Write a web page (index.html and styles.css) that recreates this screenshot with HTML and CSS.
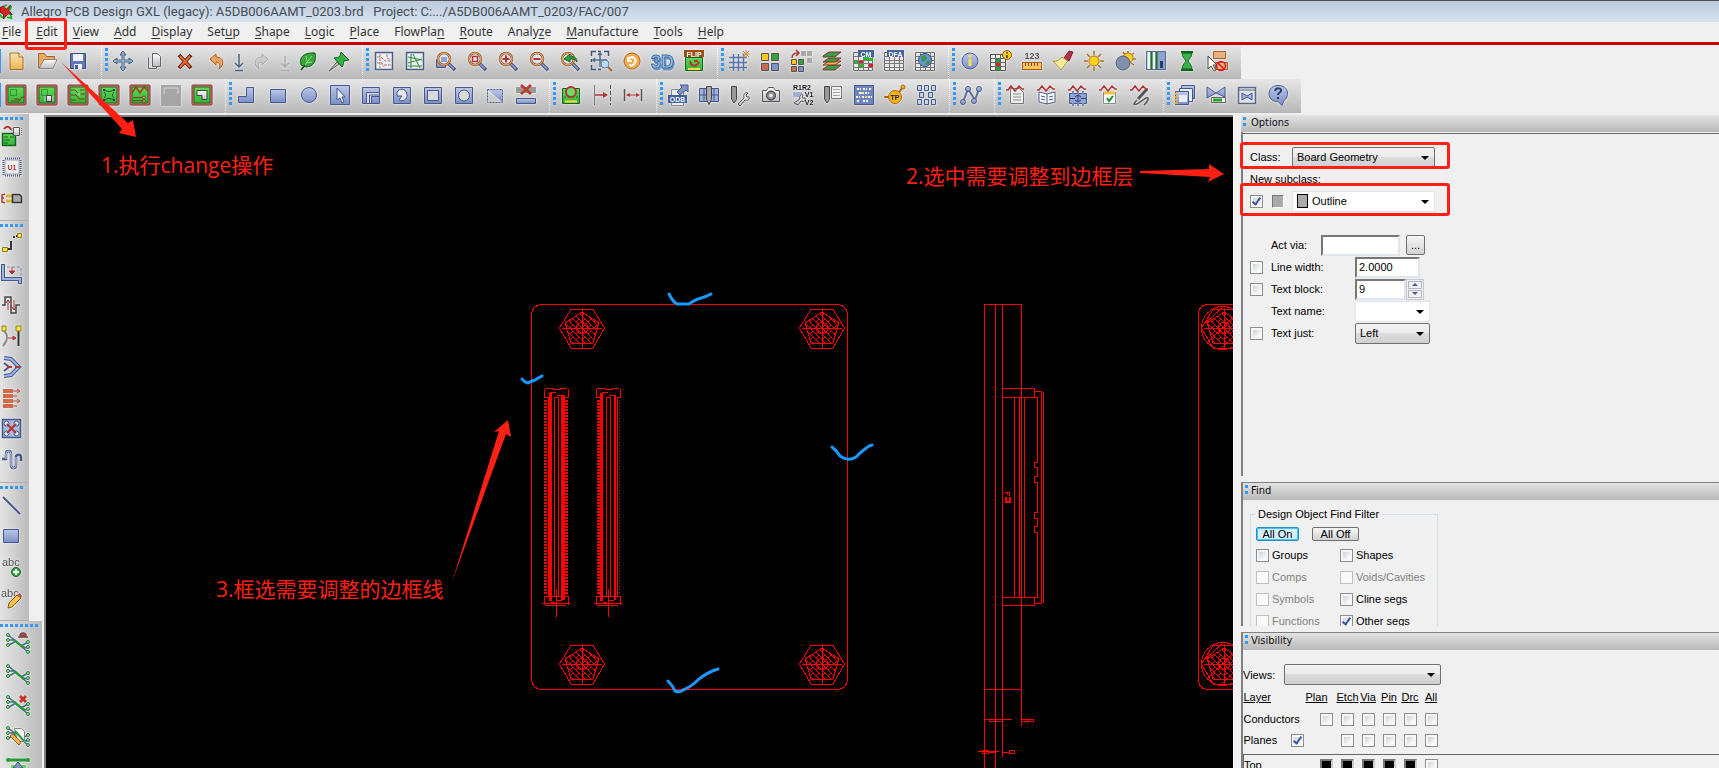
FILE: index.html
```html
<!DOCTYPE html>
<html lang="en">
<head>
<meta charset="utf-8">
<title>Allegro PCB Design GXL (legacy): A5DB006AAMT_0203.brd</title>
<link rel="stylesheet" href="styles.css">
</head>
<body>
<svg class="defs" width="0" height="0" aria-hidden="true">
  <defs>
    <linearGradient id="gb" x2="0" y2="1"><stop stop-color="#bcc8e8"/><stop offset="1" stop-color="#7c8fc4"/></linearGradient>
    <linearGradient id="gy" x2="0" y2="1"><stop stop-color="#fde3ae"/><stop offset="1" stop-color="#eeb356"/></linearGradient>
    <linearGradient id="gg" x2="0" y2="1"><stop stop-color="#62d858"/><stop offset="1" stop-color="#35b435"/></linearGradient>
    <linearGradient id="gs" x2="0" y2="1"><stop stop-color="#fff"/><stop offset="1" stop-color="#b9bcc4"/></linearGradient>
    <pattern id="hatch" width="6" height="6" patternUnits="userSpaceOnUse"><path d="M0 0L6 6M0 6L3 3" stroke="#f00" fill="none"/></pattern>
    <symbol id="lens" viewBox="0 0 24 24"><path d="M14 14l7 7" stroke="#46547c" stroke-width="3.500"/><path d="M15 15l5 5" stroke="#8ea0d0" stroke-width="1.500"/><circle cx="10" cy="10" r="6" fill="#dfe7f6" stroke="#9a5a2c" stroke-width="2.500"/><circle cx="10" cy="10" r="6" fill="none" stroke="#f0b884"/></symbol>
    <symbol id="pcb" viewBox="0 0 24 24"><rect x="2" y="2" width="20" height="20" rx="1" fill="#e87070" stroke="#7c2b2b"/><rect x="4" y="4" width="16" height="16" fill="url(#gg)" stroke="#1b6b1f"/></symbol>
    <symbol id="sheet" viewBox="0 0 24 24"><path d="M2.500 3.500h19v18h-19z" fill="#e8e8e8" stroke="#6d6d6d"/><path d="M2 7.500h20M2 11.500h20M2 14.500h20M2 18.500h20M7.500 3v19M12.500 3v19M17.500 3v19" stroke="#777" fill="none"/></symbol>
    <symbol id="wave" viewBox="0 0 24 24"><path d="M2 7h2l3-4 4 5 4-5 3 3h2" fill="none" stroke="#b23434" stroke-width="1.500"/></symbol>
    <symbol id="ratsnest" viewBox="0 0 24 24"><path d="M2 4l8 6M2 9h7M3 14l7-4M15 15l7-4M16 16l6 1M16 16l6 5" stroke="#4d6596" stroke-width="1.500" fill="none"/><path d="M8 9l10 8" stroke="#239a35" stroke-width="2.500"/><g fill="#b7dcb7" stroke="#1d7d31"><circle cx="2" cy="4" r="1.500"/><circle cx="2" cy="9" r="1.500"/><circle cx="2" cy="14" r="1.500"/><circle cx="22" cy="11" r="1.500"/><circle cx="22" cy="16" r="1.500"/><circle cx="22" cy="21" r="1.500"/></g></symbol>
    <g id="screw" fill="none" stroke="#f00"><path d="M-11-18.500h22L22.500 0 11 20h-22L-22.500 0z"/><path d="M0-16l17 11-6 20h-22l-6-20z" fill="url(#hatch)"/><circle r="6"/><path d="M-20 .5H20M.5-20V21"/></g>
  </defs>
</svg>

<div class="app">
  <header class="titlebar">
    <svg class="logo" viewBox="0 0 16 18" aria-hidden="true"><path d="M0 4l4-2 3 4 5-5-2 6 4 5-5-1-5 6V12L0 9z" fill="#d22" stroke="#611"/><path d="M5 2l3-1M11 7l2-5M8 15l5 1-1-4M0 12l3 4" stroke="#0b0" stroke-width="2" fill="none"/></svg>
    <h1 class="title">Allegro PCB Design GXL (legacy): A5DB006AAMT_0203.brd&nbsp;&nbsp; Project: C:.../A5DB006AAMT_0203/FAC/007</h1>
  </header>
  <nav class="menubar">
    <a href="#"><u>F</u>ile</a><a href="#" class="edit"><u>E</u>dit</a><a href="#"><u>V</u>iew</a><a href="#"><u>A</u>dd</a><a href="#"><u>D</u>isplay</a><a href="#">Set<u>u</u>p</a><a href="#"><u>S</u>hape</a><a href="#"><u>L</u>ogic</a><a href="#"><u>P</u>lace</a><a href="#">FlowPla<u>n</u></a><a href="#"><u>R</u>oute</a><a href="#">Analy<u>z</u>e</a><a href="#"><u>M</u>anufacture</a><a href="#"><u>T</u>ools</a><a href="#"><u>H</u>elp</a>
  </nav>

  <div class="toolrow">
    <div class="group first">
      <button aria-label="New"><svg viewBox="0 0 24 24"><path d="M6 4h9l4 4v12.500H6z" fill="url(#gy)" stroke="#a0702a"/><path d="M15 4v4h4" fill="#fff3d5" stroke="#a0702a"/></svg></button>
      <button aria-label="Open"><svg viewBox="0 0 24 24"><path d="M3.500 19V4.500h6l2 3h8V11" fill="#e9ab62" stroke="#a0602a"/><path d="M4 19.500l5-9h13l-4 9z" fill="url(#gs)" stroke="#8d8377"/></svg></button>
      <button aria-label="Save"><svg viewBox="0 0 24 24"><path d="M4.500 4.500h15v15h-15z" fill="#6479b8" stroke="#3a4b80"/><path d="M7 5h10v7H7zM8 15h8v5H8z" fill="#eef1fa"/><path d="M9 16h3v4H9z" fill="#4b5d94"/></svg></button>
    </div>
    <div class="group"><i class="grip"></i>
      <button aria-label="Move"><svg viewBox="0 0 24 24"><path d="M12 3v18M3 12h18" stroke="#3f5d7d" stroke-width="3"/><path d="M12 2l3 4H9zM12 22l3-4H9zM2 12l4-3v6zM22 12l-4-3v6z" fill="#6f93b5" stroke="#3f5d7d"/><path d="M12 3v18M3 12h18" stroke="#b9d2e8"/></svg></button>
      <button aria-label="Copy"><svg viewBox="0 0 24 24"><path d="M6.500 8.500v11h8v-2" fill="#ddd" stroke="#666"/><path d="M10.500 4.500h5l3 3v10h-8z" fill="url(#gs)" stroke="#666"/></svg></button>
      <button aria-label="Delete"><svg viewBox="0 0 24 24"><path d="M6 6l12 13M18 6L6 19" stroke="#5f1f0b" stroke-width="4"/><path d="M7 7l10 11M17 7L7 18" stroke="#e36a2c" stroke-width="2"/></svg></button>
      <button aria-label="Undo"><svg viewBox="0 0 24 24"><path d="M6 10l6-5v3c8 0 9 8 3 12 2-5 0-7-3-7v3z" fill="#f0a35a" stroke="#a85f22"/></svg></button>
      <button class="slim" aria-label="Undo steps"><svg viewBox="0 0 16 24"><path d="M8 5v13M4 14l4 4 4-4M4 21.500h8" fill="none" stroke="#4a6284" stroke-width="1.500"/></svg></button>
      <button aria-label="Redo"><svg viewBox="0 0 24 24"><path d="M18 10l-6-5v3c-8 0-9 8-3 12-2-5 0-7 3-7v3z" fill="#ccc" stroke="#a5a5a5"/></svg></button>
      <button class="slim" aria-label="Redo steps"><svg viewBox="0 0 16 24"><path d="M8 7v11M4 14l4 4 4-4M4 21.500h8" fill="none" stroke="#aaa" stroke-width="1.500"/></svg></button>
      <button aria-label="Highlight"><svg viewBox="0 0 24 24"><path d="M5 16C2 8 9 3 19 4c2 8-2 14-9 14z" fill="#3ba53b" stroke="#145c1e"/><path d="M5 21l4-5" stroke="#145c1e" stroke-width="2"/><path d="M9 16l7-9M10 14l6-1M11 12l-1-5" stroke="#8fdc86" fill="none"/></svg></button>
      <button aria-label="Pin"><svg viewBox="0 0 24 24"><path d="M2 22l8-9 2 2z" fill="#ccc" stroke="#555"/><path d="M7 9c3-1 4 0 6-2l1-4 8 8-5 1c-1 2 0 3-2 6z" fill="#35b045" stroke="#145c1e"/></svg></button>
    </div>
    <div class="group"><i class="grip"></i>
      <button aria-label="Unrats"><svg viewBox="0 0 24 24"><path d="M3.500 3.500h17v17h-17z" fill="#e9eef0" stroke="#4a5d86" stroke-width="1.500"/><path d="M5 8h4l4 4h6M5 14h5l2 4M15 5v4l4 2M8 5v14M12 16h7" stroke="#c27474" stroke-dasharray="3 1" fill="none"/></svg></button>
      <button aria-label="Rats"><svg viewBox="0 0 24 24"><path d="M3.500 3.500h17v17h-17z" fill="#e9eef0" stroke="#4a5d86" stroke-width="1.500"/><path d="M5 8l14 3M5 14l14-4M10 5l7 14M8 5v14M5 17h14" stroke="#318a3c" fill="none"/></svg></button>
      <button aria-label="Zoom points"><svg viewBox="0 0 24 24"><path d="M2.500 10.500h9v8h-9z" fill="url(#gb)" stroke="#46547c"/><use href="#lens"/><path d="M7 8h6v5H7z" fill="#8fa2d4"/></svg></button>
      <button aria-label="Zoom fit"><svg viewBox="0 0 24 24"><use href="#lens"/><path d="M7.500 7.500h5v5h-5z" fill="none" stroke="#b23434" stroke-width="1.500"/></svg></button>
      <button aria-label="Zoom in"><svg viewBox="0 0 24 24"><use href="#lens"/><path d="M10 6.500v7M6.500 10h7" stroke="#b23434" stroke-width="2"/></svg></button>
      <button aria-label="Zoom out"><svg viewBox="0 0 24 24"><use href="#lens"/><path d="M6.500 10h7" stroke="#b23434" stroke-width="2"/></svg></button>
      <button aria-label="Zoom previous"><svg viewBox="0 0 24 24"><use href="#lens"/><path d="M6 10l6-5v3c5-1 7 1 7 5-2-3-4-3-7-3v3z" fill="#32a43c" stroke="#17611f"/></svg></button>
      <button aria-label="Zoom world"><svg viewBox="0 0 24 24"><path d="M2.500 7V2.500H7m2 0h3m3 0h4.500V7M2.500 10v3m0 3v4.500H7m2 0h3" fill="none" stroke="#3e5273" stroke-width="1.500"/><path d="M11 4v14M4 11h14M9 6l2-2 2 2M6 9l-2 2 2 2" fill="none" stroke="#4e6c8f" stroke-width="1.500"/><circle cx="16" cy="15" r="4" fill="#b9dcf4" stroke="#5782a8"/><path d="M19 18l4 4" stroke="#a65f26" stroke-width="2"/></svg></button>
      <button aria-label="Redraw"><svg viewBox="0 0 24 24"><circle cx="12" cy="12" r="8" fill="#f0a94c" stroke="#b46a1b"/><path d="M8 8v4h4M8 11c4-6 9-1 7 3-1 2-3 3-6 2" fill="none" stroke="#fff" stroke-width="2"/></svg></button>
      <button aria-label="3D view"><svg viewBox="0 0 24 24"><text class="t3d shade" x="1" y="21">3D</text><text class="t3d" x="0" y="19">3D</text></svg></button>
      <button aria-label="Flip board"><svg viewBox="0 0 24 24"><path d="M3.500 8.500h17v13h-17z" fill="url(#gg)" stroke="#17611f"/><path d="M6 20h12" stroke="#ffe04c" stroke-width="2"/><path d="M8 12c1 6 7 6 9 1M12 12h4" stroke="#b23434" stroke-width="2" fill="none"/><path d="M2 1h20v7H2z" fill="#9d4d10"/><text class="tiny" x="12" y="7.500" fill="#fff">FLIP</text></svg></button>
    </div>
    <div class="group"><i class="grip"></i>
      <button aria-label="Grid"><svg viewBox="0 0 24 24"><path d="M6.500 5v17M11.500 5v17M16.500 5v17M2 8.500h18M2 13.500h18M2 18.500h18" stroke="#5a73aa" stroke-width="1.500"/><path d="M19 1v8M15 5h8M16 2l6 6M22 2l-6 6" stroke="#cc8f45"/></svg></button>
      <button aria-label="Colors"><svg viewBox="0 0 24 24"><g stroke="#555"><path d="M3.500 4.500h7v7h-7z" fill="#ffc61a"/><path d="M13.500 4.500h7v7h-7z" fill="#37a33b"/><path d="M3.500 14.500h7v7h-7z" fill="#c76d4e"/><path d="M13.500 14.500h7v7h-7z" fill="#7d91cd"/></g></svg></button>
      <button aria-label="Color visibility"><svg viewBox="0 0 24 24"><path d="M12 2h5v5h-5zM18 2h5v5h-5zM18 9h5v5h-5z" fill="#aaa"/><g stroke="#555"><path d="M2.500 10.500h5v5h-5z" fill="#ffc61a"/><path d="M9.500 10.500h5v5h-5z" fill="#37a33b"/><path d="M2.500 17.500h5v5h-5z" fill="#c76d4e"/><path d="M9.500 17.500h5v5h-5z" fill="#7d91cd"/></g><path d="M3 9c0-4 3-5 6-5M7 1l3 3-3 3" stroke="#b23434" stroke-width="1.500" fill="none"/></svg></button>
      <button aria-label="Cross section"><svg viewBox="0 0 24 24"><path d="M3 20l6-4h12l-6 5H3z" fill="#35a045" stroke="#803030"/><path d="M3 16l6-4h12l-6 4H3z" fill="#f2b04c" stroke="#803030"/><path d="M3 13l6-4h12l-6 4H3zM3 7l6-4h12l-6 5H3z" fill="#35a045" stroke="#803030"/></svg></button>
      <button aria-label="Constraint manager"><svg viewBox="0 0 24 24"><use href="#sheet"/><path d="M3 12h4v2H3zM8 15h4v3H8zM13 8h4v3h-4z" fill="#1fc01f"/><path d="M8 12h4v2H8zM18 15h4v3h-4z" fill="#e01818"/><path d="M18 9h4v3h-4z" fill="#1fc01f"/><path d="M7 1h16v7H7z" fill="#44639f"/><text class="tiny" x="15" y="7.500" fill="#fff">CM</text></svg></button>
      <button aria-label="DFA table"><svg viewBox="0 0 24 24"><use href="#sheet"/><path d="M5 1h17v7H5z" fill="#44639f"/><text class="tiny" x="13.500" y="7.500" fill="#fff">DFA</text></svg></button>
      <button aria-label="Web table"><svg viewBox="0 0 24 24"><use href="#sheet"/><circle cx="12" cy="11" r="6.500" fill="#6d93cf" stroke="#30527f"/><path d="M8 8l4-2 2 3-2 3-3 1zM13 13l4-2-1 4-3 1z" fill="#31974a"/></svg></button>
    </div>
    <div class="group"><i class="grip"></i>
      <button aria-label="Info"><svg viewBox="0 0 24 24"><circle cx="12" cy="12" r="8" fill="url(#gb)" stroke="#4a5f9f"/><path d="M12 10v7M12 6v2.500" stroke="#ffe04c" stroke-width="3"/></svg></button>
      <button aria-label="Element report"><svg viewBox="0 0 24 24"><path d="M1.500 5.500h15v16h-15z" fill="#eee" stroke="#555"/><path d="M2 9.500h15M2 13.500h15M2 17.500h15M6.500 6v16M11.500 6v16" stroke="#666"/><path d="M7 10h4v3H7zM7 18h4v3H7z" fill="#1fa52f"/><path d="M7 14h4v3H7z" fill="#d22"/><circle cx="18" cy="6" r="4.500" fill="#ffc81f" stroke="#8a5b12"/><path d="M18 3v1.500M18 6v3" stroke="#333" stroke-width="1.500"/></svg></button>
      <button aria-label="Measure"><svg viewBox="0 0 24 24"><text class="meas" x="12" y="10">123</text><path d="M2.500 13.500h19v7h-19z" fill="#fbc55c" stroke="#a25c1a"/><path d="M5.500 14v3m3-3v3m3-3v3m3-3v3m3-3v3" stroke="#8a4a12"/></svg></button>
      <button aria-label="Clear highlight"><svg viewBox="0 0 24 24"><path d="M13 9l5-7 4 1-4 9z" fill="#b8324a" stroke="#7a1b2c"/><path d="M2 12c4 1 7-2 9-4l6 4c-3 3-4 6-7 9z" fill="#f6eb9c" stroke="#a08a35"/></svg></button>
      <button aria-label="Show all"><svg viewBox="0 0 24 24"><path d="M12 2v4M12 18v4M2 12h4M18 12h4M5 5l3 3M16 16l3 3M19 5l-3 3M8 16l-3 3" stroke="#b0701d" stroke-width="1.500"/><circle cx="12" cy="12" r="5" fill="#ffd21c" stroke="#b0701d"/></svg></button>
      <button aria-label="Shadow mode"><svg viewBox="0 0 24 24"><path d="M15 2v3M21 4l-3 2M23 10h-3M10 3l2 3M21 16l-3-2" stroke="#b0701d" stroke-width="1.500"/><circle cx="15" cy="9" r="5" fill="#ffd21c" stroke="#b0701d"/><circle cx="10" cy="14" r="7" fill="#8290ae" stroke="#4b5b80"/></svg></button>
      <button aria-label="Dehighlight"><svg viewBox="0 0 24 24"><path d="M2.500 2.500h19v18h-19z" fill="#8fa2cf" stroke="#5a6a96"/><path d="M5 3v17M10 3v17" stroke="#e9fbe9" stroke-width="3"/><path d="M7.500 3v17M12.500 3v17" stroke="#23672e" stroke-width="2"/><path d="M16 12h3v7h-3z" fill="#2d3c66"/></svg></button>
      <button aria-label="Wait"><svg viewBox="0 0 24 24"><path d="M6 3h12M6 21h12" stroke="#17611f" stroke-width="2"/><path d="M7 4h10c0 4-3 6-4 8 1 2 4 4 4 8H7c0-4 3-6 4-8-1-2-4-4-4-8z" fill="#38b04a" stroke="#17611f"/></svg></button>
      <button aria-label="Cancel select"><svg viewBox="0 0 24 24"><path d="M7.500 2.500h12v7h-12zM9.500 13.500h12v7h-12z" fill="#e8b184" stroke="#a85f2a"/><circle cx="15" cy="17" r="4.500" fill="none" stroke="#e01818" stroke-width="1.500"/><path d="M12 14l6 6" stroke="#e01818" stroke-width="1.500"/><path d="M2 7v13l3-3 3 5 2-1-3-5h4z" fill="#fff" stroke="#444"/></svg></button>
    </div>
  </div>

  <div class="toolrow">
    <div class="group first">
      <button aria-label="General edit"><svg viewBox="0 0 24 24"><use href="#pcb"/><path d="M6.500 6.500h6v6h-6z" fill="none" stroke="#17611f" stroke-dasharray="1 1"/><path d="M7 18h8l3-4h3M10 16h5" stroke="#803a20" fill="none"/></svg></button>
      <button aria-label="Placement edit"><svg viewBox="0 0 24 24"><use href="#pcb"/><path d="M6.500 6.500h6v6h-6z" fill="none" stroke="#17611f" stroke-dasharray="1 1"/><path d="M11.500 12.500h5v6h-5z" fill="url(#gs)" stroke="#444"/><path d="M10 13v5M18 13v5" stroke="#dce"/></svg></button>
      <button aria-label="Etch edit"><svg viewBox="0 0 24 24"><use href="#pcb"/><path d="M5 7h4l4 4h6M5 12h5l3 4h6M14 7h5M5 17h5" stroke="#803a20" fill="none"/><circle cx="13" cy="11" r="1.500" fill="#9c8"/></svg></button>
      <button aria-label="Flow plan"><svg viewBox="0 0 24 24"><use href="#pcb"/><path d="M8 7c2 2 6 2 8 0M8 17c2-2 6-2 8 0M7 9c2 2 2 4 0 6M17 9c-2 2-2 4 0 6" fill="none" stroke="#1f4f3a"/><path d="M6 6h2v2H6zM16 6h2v2h-2zM6 16h2v2H6zM16 16h2v2h-2z" fill="#335"/></svg></button>
      <button aria-label="Signal integrity"><svg viewBox="0 0 24 24"><use href="#pcb"/><path d="M4 10l4-6 4 6 4-6 4 4" stroke="#a33c2c" stroke-width="1.500" fill="none"/><path d="M5 14.500h9M5 17.500h9" stroke="#803a20"/><g fill="#9c8" stroke="#803a20"><circle cx="16" cy="14.500" r="1.500"/><circle cx="16" cy="18" r="1.500"/></g></svg></button>
      <button aria-label="Unavailable mode" disabled><svg viewBox="0 0 24 24"><path d="M2 2h20v21H2z" fill="#a6a6a6"/><path d="M5 11V5h14v6" fill="none" stroke="#d8d8d8"/></svg></button>
      <button aria-label="Shape edit"><svg viewBox="0 0 24 24"><use href="#pcb"/><path d="M7 7.500h10v9h-5v-4H7z" fill="url(#gs)" stroke="#444"/></svg></button>
    </div>
    <div class="group"><i class="grip"></i>
      <button aria-label="Shape polygon"><svg viewBox="0 0 24 24"><path d="M3.500 13.500h8v-9h7v15h-15z" fill="url(#gb)" stroke="#46598c"/></svg></button>
      <button aria-label="Shape rectangle"><svg viewBox="0 0 24 24"><path d="M4.500 6.500h15v13h-15z" fill="url(#gb)" stroke="#46598c"/></svg></button>
      <button aria-label="Shape circle"><svg viewBox="0 0 24 24"><circle cx="12" cy="12" r="7.500" fill="url(#gb)" stroke="#46598c"/></svg></button>
      <button aria-label="Shape select"><svg viewBox="0 0 24 24"><path d="M2.500 2.500h19v19h-19z" fill="url(#gb)" stroke="#46598c"/><path d="M9 5v12l3-2 2 5 2-1-2-5h3z" fill="#e8ecf7" stroke="#46598c"/></svg></button>
      <button aria-label="Shape void polygon"><svg viewBox="0 0 24 24"><path d="M3.500 4.500h17v16h-17z" fill="url(#gb)" stroke="#46598c"/><path d="M7.500 20.500v-11h13v4h-8v7z" fill="#d8dced" stroke="#46598c"/><path d="M10.500 20v-8H20" fill="none" stroke="#46598c"/></svg></button>
      <button aria-label="Shape edit boundary"><svg viewBox="0 0 24 24"><path d="M3.500 4.500h17v16h-17z" fill="url(#gb)" stroke="#46598c"/><path d="M7 9c2-4 9-4 10 2s-5 8-8 6l3-4H7z" fill="#e6e6e6" stroke="#46598c"/></svg></button>
      <button aria-label="Void rectangle"><svg viewBox="0 0 24 24"><path d="M3.500 4.500h17v16h-17z" fill="url(#gb)" stroke="#46598c"/><path d="M6.500 7.500h11v10h-11z" fill="#dadada" stroke="#46598c"/></svg></button>
      <button aria-label="Void circle"><svg viewBox="0 0 24 24"><path d="M3.500 4.500h17v16h-17z" fill="url(#gb)" stroke="#46598c"/><circle cx="12" cy="12.500" r="5.500" fill="#dadada" stroke="#46598c"/></svg></button>
      <button aria-label="Delete islands"><svg viewBox="0 0 24 24"><path d="M4.500 6.500h15v13z" fill="url(#gb)"/><path d="M4.500 6.500h15v13h-15z" fill="none" stroke="#46598c" stroke-dasharray="2 1"/></svg></button>
      <button aria-label="Delete shape"><svg viewBox="0 0 24 24"><path d="M2 4h20v6H2z" fill="#999"/><path d="M7 2l10 9M17 2L7 11" stroke="#b8402f" stroke-width="3"/><path d="M2.500 15.500h19v5h-19z" fill="url(#gb)" stroke="#46598c"/></svg></button>
    </div>
    <div class="group"><i class="grip"></i>
      <button aria-label="Inspect board"><svg viewBox="0 0 24 24"><path d="M3.500 5.500h17v15h-17z" fill="url(#gg)" stroke="#17611f"/><path d="M6 18.500h12" stroke="#ffe04c" stroke-width="2"/><path d="M5 14h14" stroke="#17611f" stroke-dasharray="2 2"/><circle cx="12" cy="9" r="5" fill="#6fdb6a" stroke="#b23434" stroke-width="2"/></svg></button>
      <button aria-label="Dimension from edge"><svg viewBox="0 0 24 24"><path d="M4.500 2v20" stroke="#777"/><path d="M20.500 2v20" stroke="#555" stroke-dasharray="4 2"/><path d="M5 12h9" stroke="#b23434" stroke-width="1.500"/><path d="M13 9l5 3-5 3z" fill="#b23434"/></svg></button>
      <button aria-label="Dimension"><svg viewBox="0 0 24 24"><path d="M3.500 6v12M20.500 6v12" stroke="#555" stroke-width="1.500"/><path d="M6 12h12" stroke="#b23434"/><path d="M5 12l4-2v4zM19 12l-4-2v4z" fill="#b23434"/></svg></button>
    </div>
    <div class="group"><i class="grip"></i>
      <button aria-label="ODB export"><svg viewBox="0 0 24 24"><path d="M5.500 6.500h12v16h-12z" fill="#eee" stroke="#888"/><path d="M11 9l5-5-2-2h8v7l-2-2-6 5z" fill="#7f93c4" stroke="#46598c"/><path d="M2 12h19v8H2z" fill="#3f5f9d"/><text class="tiny" x="11.500" y="19" fill="#fff">ODB</text></svg></button>
      <button aria-label="Drill table"><svg viewBox="0 0 24 24"><path d="M2.500 5.500h19v13h-19z" fill="#9fb0da" stroke="#46598c"/><path d="M2 12h20M7 5v14M17 5v14" stroke="#46598c"/><path d="M9.500 3.500h5v13l-2.500 5-2.500-5z" fill="#aaa" stroke="#444"/></svg></button>
      <button aria-label="Drill setup"><svg viewBox="0 0 24 24"><path d="M3.500 3.500h5v13L6 20l-2.500-4z" fill="#999" stroke="#444"/><path d="M10 21l6-6c-1-4 1-6 4-5l-2 2 1 2h2c1 3-2 4-4 3l-5 6z" fill="url(#gs)" stroke="#555"/></svg></button>
      <button aria-label="Artwork"><svg viewBox="0 0 24 24"><path d="M3.500 7.500h4l2-3h5l2 3h4v11h-17z" fill="url(#gs)" stroke="#555"/><circle cx="12" cy="12.500" r="4.500" fill="#8a8a8a" stroke="#333"/><circle cx="12" cy="12.500" r="2" fill="#d7e8f4"/></svg></button>
      <button aria-label="Rename refdes"><svg viewBox="0 0 24 24"><text class="tiny dark" x="12" y="7">R1R2</text><text class="tiny dark" x="19" y="14">V1</text><text class="tiny dark" x="19" y="22">V2</text><path d="M3 9h9v5H3z" fill="#9fb0d8"/><path d="M4 20l6-4c-1-3 1-5 3-4l-1 3h3c1 3-1 4-4 3l-3 4z" fill="url(#gs)" stroke="#555"/></svg></button>
      <button aria-label="Drill legend"><svg viewBox="0 0 24 24"><path d="M3.500 3.500h5v13L6 20l-2.500-4z" fill="#999" stroke="#444"/><path d="M10.500 3.500h10v12h-10z" fill="#f2f2f2" stroke="#777"/><path d="M12 6.500h7M12 9.500h7M12 12.500h7" stroke="#aaa"/></svg></button>
      <button aria-label="Thieving"><svg viewBox="0 0 24 24"><path d="M2.500 2.500h19v19h-19z" fill="#6d86c0" stroke="#46598c"/><path d="M5 6h4M11 6h4M17 6h3M7 10h10M4 14h4M10 14h10M5 18h3M11 18h6" stroke="#fff" stroke-width="2" stroke-dasharray="2 1"/><path d="M9 10h2M13 14h2" stroke="#ffe04c" stroke-width="2"/></svg></button>
      <button aria-label="Test prep"><svg viewBox="0 0 24 24"><path d="M2 14h7M15 11l4-6" stroke="#a8650f" stroke-width="2"/><circle cx="20" cy="4" r="2" fill="#f5b21f" stroke="#a8650f"/><circle cx="12" cy="14" r="6.500" fill="#f5b21f" stroke="#a8650f"/><circle cx="2" cy="14" r="1" fill="#a8650f"/><text class="tiny dark" x="12" y="16.500">TP</text></svg></button>
      <button aria-label="Test matrix"><svg viewBox="0 0 24 24"><g fill="#c8d3ec" stroke="#46598c"><path d="M3.500 2.500h4v5h-4zM10.500 2.500h4v5h-4zM17.500 2.500h4v5h-4zM5.500 9.500h4v5h-4zM14.500 9.500h4v5h-4zM3.500 16.500h4v5h-4zM10.500 16.500h4v5h-4zM17.500 16.500h4v5h-4z"/></g></svg></button>
    </div>
    <div class="group"><i class="grip"></i>
      <button aria-label="Net topology"><svg viewBox="0 0 24 24"><path d="M4 19L9 6l7 11 4-11" fill="none" stroke="#5a6e9c" stroke-width="2"/><g fill="url(#gb)" stroke="#46598c"><circle cx="4" cy="19" r="2.500"/><circle cx="9" cy="6" r="2.500"/><circle cx="15" cy="18" r="2.500"/><circle cx="20" cy="6" r="2.500"/></g></svg></button>
    </div>
    <div class="group"><i class="grip"></i>
      <button aria-label="Signal report"><svg viewBox="0 0 24 24"><path d="M6.500 5.500h9l4 4v11h-13z" fill="#efefef" stroke="#777"/><path d="M9 11h8M9 14h8M9 17h8" stroke="#888"/><use href="#wave"/></svg></button>
      <button aria-label="Signal library"><svg viewBox="0 0 24 24"><path d="M4 9l8 2 8-2v10l-8 2-8-2z" fill="#fff" stroke="#46598c"/><path d="M12 11v10M6 13l4 1M6 16l4 1M14 14l4-1M14 17l4-1" stroke="#46598c"/><use href="#wave"/></svg></button>
      <button aria-label="Signal model"><svg viewBox="0 0 24 24"><path d="M3.500 10.500h17v10h-17z" fill="#8fa3d4" stroke="#46598c"/><path d="M7 8v3M12 8v3M17 8v3M7 20v3M12 20v3M17 20v3" stroke="#7286bb" stroke-width="2"/><path d="M4 15.500h5M15 15.500h5M12 12v7M9 14l3-2 3 2M9 17l3 2 3-2" fill="none" stroke="#2d3c66"/><use href="#wave"/></svg></button>
      <button aria-label="Signal audit"><svg viewBox="0 0 24 24"><path d="M6.500 9.500h12v11h-12z" fill="#fff" stroke="#888"/><path d="M7 10h11" stroke="#f0c23c" stroke-width="3"/><path d="M10 15l2 3 4-5" fill="none" stroke="#1c8a2a" stroke-width="2"/><use href="#wave"/></svg></button>
      <button aria-label="Signal probe"><svg viewBox="0 0 24 24"><path d="M10 16L19 6" stroke="#555" stroke-width="3"/><path d="M9 17c-4 4-4 5 0 4l9-6c4-1 2 3-2 7" fill="none" stroke="#555" stroke-width="1.500"/><use href="#wave"/></svg></button>
    </div>
    <div class="group"><i class="grip"></i>
      <button aria-label="Cascade windows"><svg viewBox="0 0 24 24"><path d="M8.500 2.500h13v13h-13z" fill="url(#gb)" stroke="#46598c"/><path d="M6.500 5.500h13v13h-13z" fill="#e8ecf7" stroke="#46598c"/><path d="M2.500 8.500h13v13h-13z" fill="url(#gb)" stroke="#46598c"/><path d="M6 12h8v7H6z" fill="#e8ecf7"/><path d="M3 10v11" stroke="#e8b43a" stroke-width="3" stroke-dasharray="2 1"/></svg></button>
      <button aria-label="Compare"><svg viewBox="0 0 24 24"><path d="M3 4l9 6 9-6v10l-9-4-9 5z" fill="url(#gb)" stroke="#46598c"/><path d="M7.500 14.500h14v5h-14z" fill="#f3f3f3" stroke="#666"/><path d="M9 17h9" stroke="#24a32f" stroke-width="3"/></svg></button>
      <button aria-label="Compare window"><svg viewBox="0 0 24 24"><path d="M3.500 4.500h17v16h-17z" fill="#dfe3ea" stroke="#5a6a86" stroke-width="1.500"/><path d="M4 7h16" stroke="#5a6a86"/><path d="M7 10l5 3 5-3v7l-5-3-5 3z" fill="#9db3e0" stroke="#46598c"/></svg></button>
      <button aria-label="Help"><svg viewBox="0 0 24 24"><path d="M12 2.500c12 0 11 12 6 15l-2 5-4-4C0 19 0 2.500 12 2.500z" fill="url(#gb)" stroke="#46598c"/><path d="M9 8c1-4 7-3 6 0-1 2-3 2-3 4M12 14v2" fill="none" stroke="#2d3c66" stroke-width="2"/></svg></button>
    </div>
  </div>

  <main class="work">
    <aside class="rail">
      <div class="vgroup"><i class="vgrip"></i>
        <button aria-label="Place manually"><svg viewBox="0 0 24 24"><path d="M2.500 9.500h13v12h-13z" fill="url(#gg)" stroke="#17611f" stroke-width="1.500"/><path d="M4 13h4M10 13h4M4 16h6M4 19h4" stroke="#17611f"/><path d="M4 5c2-3 6-3 7 1" stroke="#b23434" stroke-width="2" fill="none"/><path d="M13.500 3.500h6v8h-6z" fill="url(#gs)" stroke="#555"/><path d="M21.500 4v7M12 4v7" stroke="#777" stroke-dasharray="1 1"/></svg></button>
        <button aria-label="Place component"><svg viewBox="0 0 24 24"><path d="M5 5h14v14H5z" fill="#eee" stroke="#aaa"/><path d="M5 3.500h15M5 20.500h15M3.500 5v15M20.500 5v15" stroke="#46598c" stroke-width="2" stroke-dasharray="1 1"/><text class="tiny" x="12" y="14.500" fill="#a33">U1</text></svg></button>
        <button aria-label="Swap"><svg viewBox="0 0 24 24"><path d="M5 8l-3 1v7l3 1M2 12h2" stroke="#b23434" stroke-width="1.500" fill="none"/><path d="M6 10h6M6 15h6" stroke="#d8b328" stroke-width="3"/><path d="M12.500 8.500h7l2 2v6h-9z" fill="#aaa" stroke="#333" stroke-width="1.500"/></svg></button>
      </div>
      <div class="vgroup"><i class="vgrip"></i>
        <button aria-label="Add connect"><svg viewBox="0 0 24 24"><path d="M5 18h6v-8M13 6h2M16 5h2" fill="none" stroke="#333" stroke-width="2"/><path d="M2.500 16.500h5v4h-5zM17.500 2.500h4v4h-4z" fill="#ffe63c" stroke="#8a7a20"/></svg></button>
        <button aria-label="Slide"><svg viewBox="0 0 24 24"><path d="M7 5h14v13" fill="none" stroke="#6f8cc0" stroke-dasharray="3 2"/><path d="M3 2v15h17v5" fill="none" stroke="#46598c" stroke-width="4"/><path d="M3 3v14h17v4" fill="none" stroke="#9db3e0" stroke-width="2"/><path d="M12 5v4M9 9h6l-3 3z" fill="#b23434" stroke="#b23434"/></svg></button>
        <button aria-label="Delay tune"><svg viewBox="0 0 24 24"><path d="M2 12h3V4h6v16h5v-8h4" fill="none" stroke="#444" stroke-width="1.500"/><path d="M8 17V8M6 10l2-3 2 3M14 7v9M12 14l2 3 2-3" stroke="#b23434" fill="none"/></svg></button>
        <button aria-label="Spread"><svg viewBox="0 0 24 24"><path d="M3 6c6 5 5 10 0 16" fill="none" stroke="#888" stroke-width="2"/><path d="M18.500 6v16" stroke="#333" stroke-width="2"/><path d="M2 2h4v5H2zM16 2h5v5h-5z" fill="#ffe63c" stroke="#8a7a20"/><path d="M8 14h5M13 12l3 2-3 2z" fill="#b23434" stroke="#b23434"/></svg></button>
        <button aria-label="Custom smooth"><svg viewBox="0 0 24 24"><path d="M4 3l7 1 8 8-8 8-7 1" fill="none" stroke="#46598c" stroke-width="4"/><path d="M4 3l7 1 8 8-8 8-7 1" fill="none" stroke="#9db3e0" stroke-width="2"/><path d="M4 8l5 4-5 4" fill="none" stroke="#46598c" stroke-width="2"/><path d="M7 12h5M15 12h5" stroke="#b23434" stroke-width="2"/></svg></button>
        <button aria-label="Align"><svg viewBox="0 0 24 24"><path d="M3 5h10M3 10h10M3 15h10M3 20h10" stroke="#d06a4b" stroke-width="4"/><path d="M13 5h6M13 10h4M13 15h6M13 20h4M17 3l3 2-3 2M17 13l3 2-3 2" stroke="#b24a34" fill="none"/></svg></button>
        <button aria-label="Fanout"><svg viewBox="0 0 24 24"><path d="M2.500 2.500h18v18h-18z" fill="#a7badf" stroke="#46598c" stroke-width="1.500"/><g fill="#dfe8f8" stroke="#46598c"><circle cx="6.500" cy="6.500" r="2.500"/><circle cx="16.500" cy="6.500" r="2.500"/><circle cx="6.500" cy="16.500" r="2.500"/><circle cx="16.500" cy="16.500" r="2.500"/></g><path d="M7 7l9 9M16 7l-9 9" stroke="#b23434" stroke-width="2"/></svg></button>
        <button aria-label="Meander"><svg viewBox="0 0 24 24"><path d="M2 11h4V6c0-4 5-4 5 0v11c0 4 5 4 5 0V9c0-3 5-3 5 0v4" fill="none" stroke="#46598c" stroke-width="2.500"/><path d="M6 11V6c0-4 5-4 5 0v11c0 4 5 4 5 0V9" fill="none" stroke="#d5def1"/></svg></button>
      </div>
      <div class="vgroup"><i class="vgrip"></i>
        <button aria-label="Add line"><svg viewBox="0 0 24 24"><path d="M3 4l17 17" stroke="#46598c" stroke-width="2"/></svg></button>
        <button aria-label="Add rectangle"><svg viewBox="0 0 24 24"><path d="M3.500 5.500h15v13h-15z" fill="url(#gb)" stroke="#46598c"/></svg></button>
        <button aria-label="Add text"><svg viewBox="0 0 24 24"><text class="abc" x="2" y="11">abc</text><circle cx="16" cy="17" r="4.500" fill="#35a93b" stroke="#17611f"/><path d="M16 14v6M13 17h6" stroke="#fff" stroke-width="2"/></svg></button>
        <button aria-label="Edit text"><svg viewBox="0 0 24 24"><text class="abc" x="1" y="11">abc</text><path d="M8 22l1-5 8-8 4 3-9 9z" fill="#f7c440" stroke="#8a5520"/><path d="M17 9l3-2 2 3-1 2z" fill="#c0524a"/></svg></button>
      </div>
      <div class="vgroup wide"><i class="vgrip"></i>
        <button aria-label="Route plan"><svg viewBox="0 0 24 24"><use href="#ratsnest"/><path d="M12 6h10M14 5c0-4 6-4 6 0z" fill="#a85c5c" stroke="#804040" stroke-width="1.500"/></svg></button>
        <button aria-label="Auto connect"><svg viewBox="0 0 24 24"><use href="#ratsnest"/></svg></button>
        <button aria-label="Delete route"><svg viewBox="0 0 24 24"><use href="#ratsnest"/><path d="M14 3l6 6M20 3l-6 6" stroke="#c0392b" stroke-width="3"/></svg></button>
        <button aria-label="Edit route"><svg viewBox="0 0 24 24"><use href="#ratsnest"/><path d="M8.500 4.500h7l3 3v10h-7z" fill="#f5f5f5" stroke="#888"/><path d="M9 7l9 10" stroke="#239a35" stroke-width="2"/><path d="M4 12l9 9 2-3-8-8z" fill="#f7b450" stroke="#8a5520"/></svg></button>
        <button aria-label="Route board"><svg viewBox="0 0 24 24"><path d="M2 5h20" stroke="#239a35" stroke-width="3"/><path d="M5 10h15v12H5z" fill="#5bdc55"/><path d="M12 7l5 6h-3v6h-4v-6H7z" fill="#7f93c4" stroke="#46598c"/><circle cx="2" cy="5" r="2" fill="#239a35"/><circle cx="22" cy="5" r="2" fill="#239a35"/></svg></button>
      </div>
    </aside>

    <section class="canvas" aria-label="Board canvas">
      <svg class="drawing" aria-hidden="true">
        <g transform="translate(-46 -117)" fill="none" stroke="#f00" shape-rendering="crispEdges">
          <rect x="531.500" y="304.500" width="316" height="385" rx="10"/>
          <use href="#screw" x="582" y="328"/><use href="#screw" x="822" y="328"/>
          <use href="#screw" x="582" y="664"/><use href="#screw" x="822" y="664"/>
          <!-- left connector -->
          <path d="M545 388.500h8v1h7v-1h7M544.500 389v8.500h5M568.500 389v8.500h-4M550 392h6M557 395h5M554.500 597V397.500h4V597M544.500 605v-8.500h24v8.500M542 603.500h28M545 605.500h21M556.500 589v28M551 602h4M557 600h5"/>
          <path d="M545.500 400v195" stroke-width="3" stroke-dasharray="2 1"/><path d="M549 397v200M550 393v208" stroke-width="3"/><path d="M563 395v205" stroke-width="4"/><path d="M566 400v195" stroke-width="4" stroke-dasharray="2 1"/>
          <!-- right connector -->
          <path d="M597 388.500h8v1h7v-1h7M596.500 389v8.500h5M620.500 389v8.500h-4M602 392h6M609 395h5M606.500 597V397.500h4V597M596.500 605v-8.500h24v8.500M594 603.500h28M597 605.500h21M608.500 589v28M603 602h4M609 600h5M617.500 397v200"/>
          <path d="M598.500 400v195" stroke-width="3" stroke-dasharray="2 1"/><path d="M601.500 393v208" stroke-width="3"/><path d="M615 395v205" stroke-width="2"/><path d="M619.500 400v195" stroke-dasharray="1 2"/>
          <!-- side view -->
          <path d="M984.500 768V304.500h37V726M995.500 304v464M1002.500 304v453M984 689.500h37M1002 388.500h32.500v9M1002 397.500h35.500v65h-3v5h3v9h-3v6h3v30h-3v6h3v8h-3v6h3v65H1002M1034 391.500h7.500v212h-7.500M1043.500 392v211M1014.500 397v200M1019.500 397v200M1024.500 397v200M1002 605.500h32.500v-8"/>
          <path d="M1005 492.500h4.500v3M1007.500 492v3M984 719.500h28M989.500 720v1.500h12M995 721h8M1021 719.500h12.500v2h-5v-2M1022 721h7M978 751.500h21M982.500 750.500h6v3h-6zM988 752h8M1003 752h7M1009.500 750.500h5v3h-5z"/>
          <path d="M1005.500 497v5h4v-5" stroke-width="2"/>
          <!-- mirrored board, cut by the window edge -->
          <path d="M1300 304.500h-91.500q-10 0-10 10v365q0 10 10 10H1300"/>
          <use href="#screw" x="1224" y="328"/><use href="#screw" x="1224" y="664"/>
          <circle cx="1223" cy="328" r="21.500"/><circle cx="1223" cy="664" r="21.500"/>
          <path d="M1202 326l22-20M1207 343l26-26M1202 662l22-20M1207 679l26-26M1220 350l14-14M1220 686l14-14"/>
        </g>
        <g class="ticks" transform="translate(-46 -117)">
          <path d="M669 294q4 8 8 10h12q4-3 9-5 8-2 13-5"/>
          <path d="M522 379q2 3 6 4 3-2 7-3 3-2 7-4"/>
          <path d="M832 447q5 4 8 9 8 6 16 1 6-6 9-8 3-3 7-4"/>
          <path d="M668 681q5 5 7 10 5 2 8-1 8-3 16-11 9-7 19-10"/>
        </g>
      </svg>
      <p class="note note1" lang="zh">1.执行change操作</p>
      <p class="note note2" lang="zh">2.选中需要调整到边框层</p>
      <p class="note note3" lang="zh">3.框选需要调整的边框线</p>
    </section>

    <aside class="docks">
      <section class="dock options">
        <h2>Options</h2>
        <div class="body">
          <div class="line">
            <label class="short" for="cls">Class:</label>
            <span class="drop w-l"><select id="cls"><option>Board Geometry</option></select></span>
          </div>
          <div class="caption">New subclass:</div>
          <div class="line sub-line">
            <input type="checkbox" checked aria-label="Use subclass">
            <button class="swatch" aria-label="Subclass color"></button>
            <span class="drop flat w-l"><i class="chip"></i><select aria-label="Subclass"><option>Outline</option></select></span>
          </div>
          <div class="line"><span class="slot"></span><label class="near" for="via">Act via:</label><input class="txt w-m" id="via" type="text"><button class="push dots">...</button></div>
          <div class="line"><span class="slot"><input type="checkbox" aria-label="Apply line width"></span><label class="far" for="lw">Line width:</label><input class="txt w-s" id="lw" type="text" value="2.0000"></div>
          <div class="line"><span class="slot"><input type="checkbox" aria-label="Apply text block"></span><label class="far" for="tb">Text block:</label><input class="txt w-xs" id="tb" type="text" value="9"><span class="spin"><button aria-label="Up"></button><button aria-label="Down"></button></span></div>
          <div class="line"><span class="slot"></span><label class="far" for="tn">Text name:</label><span class="drop flat w-m"><select id="tn"><option></option></select></span></div>
          <div class="line"><span class="slot"><input type="checkbox" aria-label="Apply text just"></span><label class="far" for="tj">Text just:</label><span class="drop w-m"><select id="tj"><option>Left</option></select></span></div>
          <i class="mark mark-class"></i>
          <i class="mark mark-sub"></i>
        </div>
      </section>
      <section class="dock find">
        <h2>Find</h2>
        <div class="body">
          <fieldset>
            <legend>Design Object Find Filter</legend>
            <div class="pair"><button class="push on">All On</button><button class="push">All Off</button></div>
            <div class="checks">
              <label><input type="checkbox">Groups</label><label><input type="checkbox">Shapes</label>
              <label class="off"><input type="checkbox" disabled>Comps</label><label class="off"><input type="checkbox" disabled>Voids/Cavities</label>
              <label class="off"><input type="checkbox" disabled>Symbols</label><label><input type="checkbox">Cline segs</label>
              <label class="off"><input type="checkbox" disabled>Functions</label><label><input type="checkbox" checked>Other segs</label>
            </div>
          </fieldset>
        </div>
      </section>
      <section class="dock visibility">
        <h2>Visibility</h2>
        <div class="body">
          <div class="views"><label for="vw">Views:</label><span class="drop w-xl"><select id="vw"><option></option></select></span></div>
          <table>
            <colgroup><col class="c-name"><col class="c-plane"><col class="c-plan"><col span="5" class="c-box"><col></colgroup>
            <thead><tr><th>Layer</th><th></th><th>Plan</th><th>Etch</th><th>Via</th><th>Pin</th><th>Drc</th><th>All</th><td></td></tr></thead>
            <tbody>
              <tr><th colspan="2">Conductors</th><td class="r"><input type="checkbox" aria-label="Conductors plan"></td><td><input type="checkbox" aria-label="Conductors etch"></td><td><input type="checkbox" aria-label="Conductors via"></td><td><input type="checkbox" aria-label="Conductors pin"></td><td><input type="checkbox" aria-label="Conductors drc"></td><td><input type="checkbox" aria-label="Conductors all"></td><td></td></tr>
              <tr class="planes"><th>Planes</th><td><input type="checkbox" checked aria-label="Planes"></td><td></td><td><input type="checkbox" aria-label="Planes etch"></td><td><input type="checkbox" aria-label="Planes via"></td><td><input type="checkbox" aria-label="Planes pin"></td><td><input type="checkbox" aria-label="Planes drc"></td><td><input type="checkbox" aria-label="Planes all"></td><td></td></tr>
            </tbody>
            <tbody class="layers">
              <tr><th colspan="2">Top</th><td class="r"><button class="cell" aria-label="Top plan"></button></td><td><button class="cell" aria-label="Top etch"></button></td><td><button class="cell" aria-label="Top via"></button></td><td><button class="cell" aria-label="Top pin"></button></td><td><button class="cell" aria-label="Top drc"></button></td><td><input type="checkbox" aria-label="Top all"></td><td></td></tr>
            </tbody>
          </table>
        </div>
      </section>
    </aside>
  </main>

  <svg class="arrows" aria-hidden="true">
    <path d="M61 62L128 123 133 120 136 137 119 133 122 129zM452 582L499 431 494 432 508 420 511 437 506 434zM1140 171L1209 169 1209 164 1224 174 1208 182 1210 177 1140 173z"/>
  </svg>
</div>
</body>
</html>
```

FILE: styles.css
```css
*, *::before, *::after { box-sizing: border-box; }
html, body { height: 100%; margin: 0; }
body { font: 11px/16px "Liberation Sans", Arial, sans-serif; color: #000; background: #f0f0f0; overflow: hidden; }
button { font: inherit; color: inherit; padding: 0; border: 0; background: none; }
.defs { position: absolute; }
.app { position: relative; height: 100vh; display: flex; flex-direction: column; overflow: hidden; }

.titlebar { flex: none; display: flex; align-items: center; height: 22px; border-top: 1px solid #4e4e56; background: linear-gradient(#bccadb, #d6e2ef); }
.logo { width: 14px; height: 18px; margin-right: 7px; }
.title { margin: 0; font: 13px/20px Roboto, "Open Sans", sans-serif; color: #444c56; white-space: nowrap; }

.menubar { flex: none; display: flex; gap: 15px; height: 23px; padding-left: 2px; border-bottom: 3px solid #d00000; font: 12px/20px "Noto Sans", "Open Sans", sans-serif; }
.menubar a { color: #333; text-decoration: none; white-space: nowrap; }
.menubar .edit { position: relative; }
.menubar u { text-underline-offset: 2px; }
.edit::after { content: ""; position: absolute; left: -11px; top: -4px; width: 42px; height: 32px; border: 3px solid #ff2014; border-radius: 3px; z-index: 2; }

.toolrow { flex: none; display: flex; height: 34px; }
.group { display: flex; align-items: center; padding-right: 8px; border-left: 1px dotted #fff; border-bottom: 1px solid #b4b4b4; background: linear-gradient(#e6e6e6, #b9b9b9); }
.group.first { border-left: 0; background: linear-gradient(90deg, #3399ff 0 1px, transparent 1px), linear-gradient(#e6e6e6, #b9b9b9); background-size: 100% 24px, 100%; background-repeat: no-repeat; background-position: 0 4px, 0 0; }
.group button { width: 31px; height: 30px; display: grid; place-items: center; }
.group .slim { width: 15px; }
.group svg { width: 24px; height: 24px; margin-bottom: 2px; }
.group .slim svg { width: 16px; }
.group svg, .vgroup svg { filter: drop-shadow(0 0 1px #f4f4f4); }
.grip { width: 3px; height: 24px; margin: 0 -1px 4px 3px; background: repeating-linear-gradient(#3399ff 0 3px, transparent 3px 5px); }

svg text { font-family: "Liberation Sans", sans-serif; font-weight: 700; }
.tiny { font-size: 7px; text-anchor: middle; }
.dark { fill: #222; }
.t3d { font-size: 18px; fill: #9fc0e4; stroke: #3f6ea3; }
.t3d.shade { fill: #6f98c6; stroke: #6f98c6; }
.meas { font-size: 9px; fill: #555; text-anchor: middle; }
svg .abc { font-size: 11px; font-weight: 400; fill: #555; }

.work { flex: 1; min-height: 0; display: flex; padding-top: 1px; }
.rail { flex: none; width: 44px; }
.vgroup { width: 29px; display: flex; flex-direction: column; align-items: flex-start; padding: 3px 0 7px; border-right: 1px solid #bbb; border-bottom: 1px solid #b0b0b0; background: linear-gradient(90deg, #e4e4e4, #bcbcbc); }
.vgroup.wide { width: 42px; }
.vgrip { width: 23px; height: 3px; background: repeating-linear-gradient(90deg, #3399ff 0 3px, transparent 3px 5px); }
.wide .vgrip { width: 38px; }
.vgroup button { width: 22px; height: 31px; display: grid; place-items: center; }
.vgroup.wide button { width: 36px; }
.vgroup svg { width: 24px; height: 24px; }

.canvas { flex: 1; min-width: 0; position: relative; overflow: hidden; margin-top: 1px; border-top: 2px solid #808080; border-left: 2px solid #808080; background: #000; }
.drawing { display: block; width: 100%; height: 100%; }
.ticks { fill: none; stroke: #1a98ff; stroke-width: 3; stroke-linecap: round; }
.note { position: absolute; margin: 0; font: 21px/28px "Open Sans", "Noto Sans CJK SC", sans-serif; color: #ff2014; white-space: nowrap; }
.note1 { left: 55px; top: 34px; }
.note2 { left: 860px; top: 45px; }
.note3 { left: 170px; top: 458px; }
.arrows { position: absolute; inset: 0; width: 100%; height: 100%; fill: #ff2014; pointer-events: none; }

.docks { flex: none; width: 486px; display: flex; flex-direction: column; padding: 1px 0 0 7px; border-left: 1px solid #fff; background: #f0f0f0; }
.dock { border-left: 2px solid #808080; overflow: hidden; }
.dock h2 { margin: 0; padding-left: 8px; height: 17px; font: 11px/15px "DejaVu Sans Condensed", "DejaVu Sans", sans-serif; color: #111; background: linear-gradient(#3399ff, #3399ff) 2px 2px / 3px 3px no-repeat, linear-gradient(#3399ff, #3399ff) 2px 8px / 3px 3px no-repeat, linear-gradient(#e2e2e2, #b9b9b9); }
.options { flex: none; height: 361px; margin-bottom: 6px; overflow: visible; }
.options h2 { margin-left: -2px; margin-bottom: 1px; padding-left: 10px; }
.find { flex: none; height: 144px; margin-bottom: 6px; border-top: 1px solid #808080; }
.visibility { flex: 1; border-top: 1px solid #808080; }

.options .body { position: relative; border-top: 1px solid #666; padding: 12px 0 0 7px; height: 343px; }
.line { display: flex; align-items: center; height: 22px; }
.short { width: 42px; }
.caption { height: 22px; line-height: 22px; }
.sub-line { margin-bottom: 22px; }
.swatch { width: 12px; height: 13px; margin: 0 8px 0 9px; background: #aaa; border: 1px solid #777; border-right-color: #fff; border-bottom-color: #fff; }
.slot { width: 21px; display: flex; }
.near { width: 50px; }
.far { width: 84px; }

input[type="checkbox"] { appearance: none; flex: none; width: 13px; height: 13px; margin: 0; border: 1px solid #8e8f8f; background: linear-gradient(135deg, #cfd2d6, #fff) content-box, #f6f6f6; padding: 2px; position: relative; }
input[type="checkbox"]:disabled { border-color: #c0c0c0; background: #fafafa; }
input[type="checkbox"]:checked::after { content: ""; position: absolute; left: 3px; top: 0; width: 5px; height: 9px; border: solid #3a55a0; border-width: 0 2px 2px 0; transform: rotate(35deg); }

.txt { height: 21px; padding: 0 2px; border: 2px solid; border-color: #777 #e0e6ee #e0e6ee #777; background: #fff; font: inherit; }
.w-xs { width: 51px; }
.w-s { width: 65px; }
.w-m { width: 75px; }
.txt.w-m { width: 79px; }
.w-l { width: 143px; }
.w-xl { width: 157px; }
.drop { position: relative; display: flex; align-items: center; height: 21px; border: 1px solid #707070; border-radius: 2px; background: linear-gradient(#f2f2f2, #ebebeb 50%, #dddddd 50%, #cfcfcf); }
.drop.flat { border-color: #dfe3ea; border-radius: 0; background: #fff; }
.drop select { appearance: none; flex: 1; min-width: 0; height: 19px; padding: 0 4px; border: 0; background: none; font: inherit; color: inherit; }
.drop::after { content: ""; position: absolute; right: 5px; top: 8px; border: 4px solid transparent; border-top-color: #000; border-bottom: 0; pointer-events: none; }
.chip { width: 11px; height: 14px; margin-left: 4px; border: 1px solid #000; background: #aaa; }
.push { height: 14px; line-height: 12px; border: 1px solid #707070; border-radius: 2px; background: linear-gradient(#f6f6f6, #d2d2d2); }
.push.on { border-color: #2a8dc0; background: #d6eef9; box-shadow: inset 0 0 0 1px #40c8f4; }
.dots { width: 19px; height: 20px; margin-left: 6px; }
.spin { display: flex; flex-direction: column; gap: 1px; padding: 1px; border: 1px solid #c5cad2; }
.spin button { width: 14px; height: 8px; border: 1px solid #b5b9c0; background: #f0f0f0; display: grid; place-items: center; }
.spin button::after { content: ""; border: 3px solid transparent; border-bottom-color: #3f5a9a; border-top: 0; }
.spin button:last-child::after { border-top: 3px solid #3f5a9a; border-bottom: 0; }

.mark { position: absolute; left: -3px; width: 210px; border: 3px solid #ff2014; border-radius: 3px; pointer-events: none; }
.mark-class { top: 8px; height: 27px; }
.mark-sub { top: 49px; height: 33px; }

.find .body { padding: 7px 0 0 7px; }
fieldset { width: 188px; margin: 0; padding: 6px 0 0 5px; border: 1px solid #d5dfe5; }
legend { padding: 0 2px; line-height: 14px; }
.pair { display: flex; gap: 13px; }
.pair .push { width: 47px; }
.pair .on { width: 43px; }
.checks { display: grid; grid-template-columns: 84px 1fr; grid-auto-rows: 22px; margin-top: 3px; }
.checks label { display: flex; align-items: center; gap: 3px; white-space: nowrap; }
.off { color: #808080; }

.views { display: flex; align-items: center; height: 21px; margin-top: 14px; }
.views label { width: 41px; }
table { table-layout: fixed; width: 100%; margin-top: 1px; border-collapse: collapse; }
.c-name { width: 46px; }
.c-plane { width: 16px; }
.c-plan { width: 31px; }
.c-box { width: 21px; }
th, td { height: 22px; padding: 0; font-weight: 400; text-align: center; white-space: nowrap; }
th:first-child, thead th:nth-child(3) { text-align: left; }
thead th { text-decoration: underline; }
td input, td button { display: block; margin: 0 auto !important; }
td.r { padding-left: 10px; }
.planes th, .planes td { height: 24px; padding-bottom: 3px; }
.layers { border-top: 1px solid #666; border-left: 1px solid #666; }
.cell { width: 13px; height: 13px; border: 2px solid #999; border-color: #777 #ccc #ccc #777; background: #000; }
```
